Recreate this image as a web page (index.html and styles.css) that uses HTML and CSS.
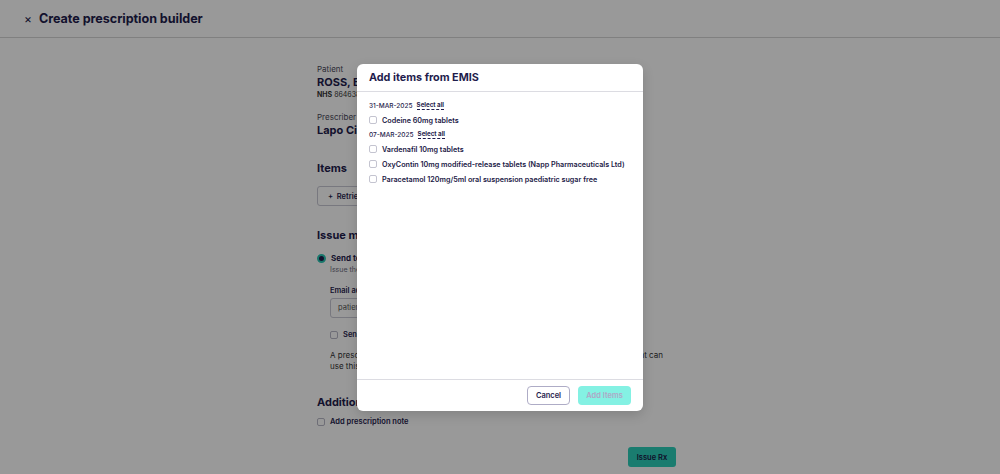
FILE: index.html
```html
<!DOCTYPE html>
<html>
<head>
<meta charset="utf-8">
<link rel="stylesheet" href="styles.css">
</head>
<body>
<header class="topbar">
  <span class="close">×</span>
  <h1 class="title">Create prescription builder</h1>
</header>
<main class="page">
  <div class="col">
    <div class="label">Patient</div>
    <div class="name">ROSS, Bobby (Mr)</div>
    <div class="nhs"><b>NHS</b> 8646382214</div>
    <div class="label mt-presc">Prescriber</div>
    <div class="name">Lapo Cianciulli</div>
    <h2 class="section mt-items">Items</h2>
    <button class="retrieve">+&nbsp;&nbsp;Retrieve from EMIS</button>
    <h2 class="section mt-issue">Issue method</h2>
    <div class="radio-row"><span class="radio"></span><span class="radio-label">Send to patient</span></div>
    <div class="radio-sub">Issue the prescription by email</div>
    <div class="field-label">Email address</div>
    <div class="input">patient@example.com</div>
    <div class="check-row indent"><span class="check"></span><span>Send a copy</span></div>
    <div class="para">
      <div class="para-first"><span>A prescription token will be emailed directly to the patient's inbox.</span><span>The patient can</span></div>
      <div>use this token at any pharmacy.</div>
    </div>
    <h2 class="section mt-add">Additional information</h2>
    <div class="check-row note"><span class="check"></span><span>Add prescription note</span></div>
    <div class="actions"><button class="issue">Issue Rx</button></div>
  </div>
</main>
<div class="overlay">
  <div class="modal">
    <div class="modal-head">Add items from EMIS</div>
    <div class="modal-body">
      <div class="date-row"><span>31-MAR-2025</span><span class="select-all">Select all</span></div>
      <div class="item"><span class="mcheck"></span>Codeine 60mg tablets</div>
      <div class="date-row"><span>07-MAR-2025</span><span class="select-all">Select all</span></div>
      <div class="item"><span class="mcheck"></span>Vardenafil 10mg tablets</div>
      <div class="item"><span class="mcheck"></span>OxyContin 10mg modified-release tablets (Napp Pharmaceuticals Ltd)</div>
      <div class="item"><span class="mcheck"></span>Paracetamol 120mg/5ml oral suspension paediatric sugar free</div>
    </div>
    <div class="modal-foot">
      <button class="btn-cancel">Cancel</button>
      <button class="btn-add">Add Items</button>
    </div>
  </div>
</div>
</body>
</html>
```
FILE: styles.css
```css
* { box-sizing: border-box; }
html, body { margin: 0; padding: 0; }
body {
  width: 1000px;
  height: 474px;
  overflow: hidden;
  background: #ffffff;
  font-family: Inter, "Noto Sans", sans-serif;
  color: #1f1d4d;
  position: relative;
}
.topbar {
  height: 38px;
  border-bottom: 1px solid #d6d6d6;
  display: flex;
  align-items: center;
  padding-left: 24px;
  gap: 7px;
}
.close { font-size: 12px; line-height: 1; color: #1f1d4d; }
.title { margin: 0; font-size: 12.6px; font-weight: 700; letter-spacing: -0.05px; }
.page { display: flex; padding-left: 317px; padding-top: 25px; }
.col { width: 360px; display: flex; flex-direction: column; align-items: flex-start; }
.label { font-size: 8px; line-height: 12px; color: #4a4a5a; }
.name { font-size: 11px; line-height: 15px; font-weight: 700; }
.nhs { font-size: 7px; line-height: 10px; color: #333; }
.mt-presc { margin-top: 11px; }
.section { margin: 0; font-size: 11px; line-height: 16px; font-weight: 700; }
.mt-items { margin-top: 22px; }
.retrieve {
  margin-top: 10px; height: 20px; padding: 0 10px;
  font-family: inherit; font-size: 7.5px; font-weight: 600; color: #1f1d4d;
  background: #fff; border: 1px solid #c8c8d4; border-radius: 3px;
}
.mt-issue { margin-top: 21px; }
.radio-row { margin-top: 9px; display: flex; align-items: center; gap: 5px; height: 12px; font-size: 8px; font-weight: 700; }
.radio { width: 9px; height: 9px; border-radius: 50%; background: #1f1d4d; border: 2.5px solid #2bc7b4; }
.radio-sub { margin-left: 13px; font-size: 7px; line-height: 12px; color: #6a6a7a; }
.field-label { margin-left: 13px; margin-top: 9px; font-size: 7.5px; font-weight: 600; line-height: 12px; }
.input {
  margin-left: 13px; margin-top: 1px; height: 20px; width: 290px;
  border: 1px solid #c8c8d4; border-radius: 3px; padding-left: 7px;
  font-size: 7.5px; line-height: 18px; color: #555;
}
.check-row { display: flex; align-items: center; gap: 5px; font-size: 7.5px; font-weight: 600; line-height: 12px; }
.indent { margin-left: 13px; margin-top: 11px; }
.check { width: 8px; height: 8px; border: 1px solid #b8b8c6; border-radius: 2px; background: #fff; }
.para { margin: 9px 0 0 13px; font-size: 8px; line-height: 11px; width: 333px; color: #333; }
.para-first { display: flex; justify-content: space-between; white-space: nowrap; }
.mt-add { margin-top: 22px; }
.note { margin-top: 6px; }
.actions { align-self: stretch; display: flex; justify-content: flex-end; margin-top: 19px; padding-right: 1px; }
.issue {
  height: 20px; width: 48px; padding: 0;
  font-family: inherit; font-size: 7.5px; font-weight: 600; color: #1a1846;
  background: #2ccfba; border: none; border-radius: 3px;
}
.overlay {
  position: absolute; inset: 0;
  background: rgba(0, 0, 0, 0.4);
  display: flex; align-items: center; justify-content: center;
}
.modal {
  width: 286px; height: 347px;
  background: #fff; border-radius: 6px;
  display: flex; flex-direction: column;
  box-shadow: 0 4px 12px rgba(0,0,0,0.15);
}
.modal-head {
  height: 28px; flex: none; border-bottom: 1px solid #dcdce2;
  display: flex; align-items: center; padding-left: 12px;
  font-size: 10.8px; font-weight: 700;
}
.modal-body { flex: 1; padding: 7px 12px 0; }
.date-row { height: 14px; display: flex; align-items: center; gap: 4px; font-size: 6.5px; font-weight: 500; }
.select-all { font-size: 6.2px; font-weight: 700; border-bottom: 1px dashed #1f1d4d; line-height: 8px; }
.item { height: 15px; display: flex; align-items: center; gap: 5px; font-size: 7.2px; font-weight: 600; white-space: nowrap; color: #1b1946; }
.mcheck { width: 8px; height: 8px; border: 1px solid #c4c4d0; border-radius: 2px; flex: none; }
.modal-foot {
  height: 32px; flex: none; border-top: 1px solid #dcdce2;
  display: flex; align-items: center; justify-content: flex-end;
  gap: 8px; padding-right: 12px;
}
.btn-cancel {
  height: 19px; width: 43px; padding: 0;
  font-family: inherit; font-size: 7.5px; font-weight: 600; color: #1f1d4d;
  background: #fff; border: 1px solid #aeacc6; border-radius: 4px;
}
.btn-add {
  height: 19px; width: 53px; padding: 0;
  font-family: inherit; font-size: 7.5px; font-weight: 600; color: #b0a6c6;
  background: #84f1e3; border: none; border-radius: 4px;
}
```
